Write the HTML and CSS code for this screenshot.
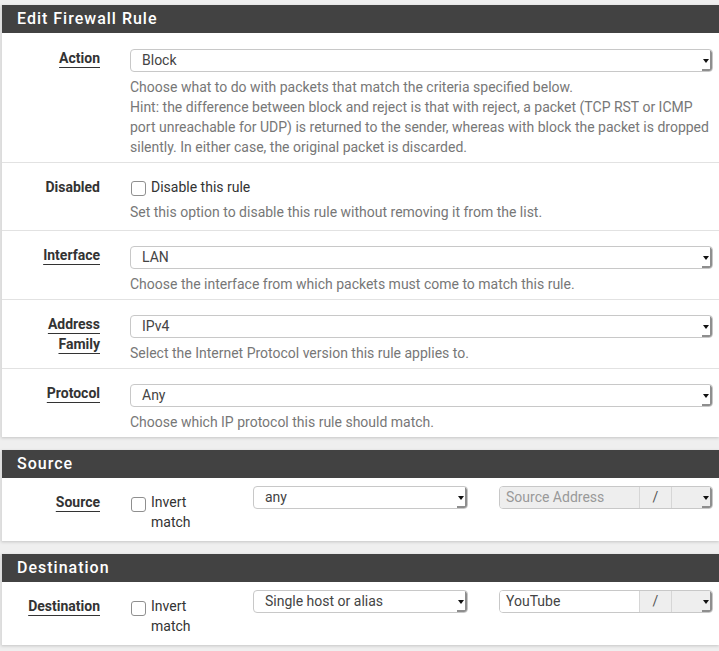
FILE: index.html
```html
<!DOCTYPE html>
<html lang="en">
<head>
<meta charset="utf-8">
<title>Edit Firewall Rule</title>
<link rel="stylesheet" href="styles.css">
</head>
<body>
<div class="page">
  <section class="panel panel-main">
    <h2 class="panel-title">Edit Firewall Rule</h2>
    <div class="panel-body">
      <div class="row">
        <div class="label"><span class="req">Action</span></div>
        <div class="field">
          <div class="select"><span class="val">Block</span><span class="caret"></span></div>
          <p class="help">Choose what to do with packets that match the criteria specified below.<br>Hint: the difference between block and reject is that with reject, a packet (TCP RST or ICMP<br>port unreachable for UDP) is returned to the sender, whereas with block the packet is dropped<br>silently. In either case, the original packet is discarded.</p>
        </div>
      </div>
      <div class="row row-check">
        <div class="label label-check">Disabled</div>
        <div class="field">
          <div class="check-line"><span class="checkbox"></span><span>Disable this rule</span></div>
          <p class="help">Set this option to disable this rule without removing it from the list.</p>
        </div>
      </div>
      <div class="row">
        <div class="label"><span class="req">Interface</span></div>
        <div class="field">
          <div class="select"><span class="val">LAN</span><span class="caret"></span></div>
          <p class="help">Choose the interface from which packets must come to match this rule.</p>
        </div>
      </div>
      <div class="row">
        <div class="label"><span class="req">Address</span><br><span class="req">Family</span></div>
        <div class="field">
          <div class="select"><span class="val">IPv4</span><span class="caret"></span></div>
          <p class="help">Select the Internet Protocol version this rule applies to.</p>
        </div>
      </div>
      <div class="row">
        <div class="label"><span class="req">Protocol</span></div>
        <div class="field">
          <div class="select"><span class="val">Any</span><span class="caret"></span></div>
          <p class="help">Choose which IP protocol this rule should match.</p>
        </div>
      </div>
    </div>
  </section>

  <section class="panel">
    <h2 class="panel-title">Source</h2>
    <div class="panel-body">
      <div class="row row-addr">
        <div class="label label-addr"><span class="req">Source</span></div>
        <div class="invert">
          <span class="checkbox checkbox-addr"></span>
          <span>Invert<br>match</span>
        </div>
        <div class="select select-type"><span class="val">any</span><span class="caret"></span></div>
        <div class="addr-group">
          <span class="addr-input addr-disabled">Source Address</span>
          <span class="addon">/</span>
          <span class="mask"><span class="caret"></span></span>
        </div>
      </div>
    </div>
  </section>

  <section class="panel">
    <h2 class="panel-title">Destination</h2>
    <div class="panel-body">
      <div class="row row-addr">
        <div class="label label-addr"><span class="req">Destination</span></div>
        <div class="invert">
          <span class="checkbox checkbox-addr"></span>
          <span>Invert<br>match</span>
        </div>
        <div class="select select-type"><span class="val">Single host or alias</span><span class="caret"></span></div>
        <div class="addr-group">
          <span class="addr-input">YouTube</span>
          <span class="addon">/</span>
          <span class="mask"><span class="caret"></span></span>
        </div>
      </div>
    </div>
  </section>
</div>
</body>
</html>
```

FILE: styles.css
```css
html, body {
  margin: 0;
  overflow: hidden;
}

body {
  background: #efefef;
  font-family: Roboto, "Liberation Sans", Arial, sans-serif;
  font-size: 14px;
  color: #333;
}

.page {
  width: 719px;
  box-sizing: border-box;
  padding: 5px 0 0 1px;
  overflow: hidden;
}

.panel {
  background: #fff;
  border-left: 1px solid #dcdcdc;
  box-shadow: 0 1px 3px rgba(0, 0, 0, 0.18);
  margin-bottom: 13px;
}

.panel-title {
  margin: 0;
  height: 28px;
  line-height: 28px;
  padding-left: 15px;
  background: #424242;
  color: #fff;
  font-size: 16px;
  font-weight: 500;
  letter-spacing: 1px;
}

.row {
  display: flex;
  align-items: flex-start;
  padding: 15px 0 5px;
  border-top: 1px solid #e2e2e2;
}

.row:first-child {
  border-top: none;
  padding-top: 16px;
}

.row-check {
  padding: 14px 0 8px;
}

.label {
  flex: none;
  width: 98px;
  padding-right: 15px;
  text-align: right;
  font-weight: 700;
  line-height: 20px;
  color: #333;
  margin-top: -1px;
}

.label-check {
  margin-top: 0;
}

.req {
  text-decoration: underline;
  text-decoration-thickness: 1px;
  text-underline-offset: 4px;
}

.field {
  flex: none;
  margin-left: 15px;
  width: 583px;
}

.select {
  display: flex;
  align-items: stretch;
  height: 23px;
  box-sizing: border-box;
  border: 1px solid #c8c8c8;
  border-radius: 4px;
  background: #fff;
  overflow: hidden;
}

.val {
  flex: 1;
  padding-left: 11px;
  line-height: 21px;
  color: #444;
  white-space: nowrap;
  overflow: hidden;
}

.caret {
  width: 10px;
  flex: none;
  display: flex;
  align-items: center;
  justify-content: center;
  box-shadow: inset -2px -2px 0 #8e8e8e;
  border-top-right-radius: 3px;
}

.caret::after {
  content: "";
  width: 0;
  height: 0;
  margin-right: 2px;
  border-left: 3px solid transparent;
  border-right: 3px solid transparent;
  border-top: 4px solid #111;
}

.help {
  margin: 5px 0 0;
  line-height: 20px;
  color: #777;
  white-space: nowrap;
}

.check-line {
  display: flex;
  align-items: flex-start;
  line-height: 20px;
  color: #333;
}

.checkbox {
  flex: none;
  width: 15px;
  height: 15px;
  box-sizing: border-box;
  border: 1px solid #8f8f8f;
  border-radius: 3px;
  background: #fff;
  margin: 4px 5px 0 1px;
}

/* source / destination rows */
.row-addr {
  padding: 8px 0 9px;
}

.row-addr:first-child {
  padding-top: 8px;
}

.label-addr {
  margin-top: 0;
  padding-top: 6px;
}

.invert {
  flex: none;
  margin-left: 15px;
  width: 108px;
  display: flex;
  align-items: flex-start;
  line-height: 20px;
  padding-top: 6px;
  color: #333;
}

.checkbox-addr {
  margin-top: 5px;
}

.select-type {
  flex: none;
  width: 215px;
  margin-left: 15px;
}

.addr-group {
  flex: none;
  margin-left: 31px;
  width: 214px;
  height: 23px;
  box-sizing: border-box;
  display: flex;
  border: 1px solid #c8c8c8;
  border-radius: 4px;
  overflow: hidden;
}

.addr-input {
  width: 140px;
  padding-left: 6px;
  box-sizing: border-box;
  line-height: 21px;
  color: #444;
  background: #fff;
  border-right: 1px solid #d6d6d6;
}

.addr-disabled {
  background: #eee;
  color: #999;
}

.addon {
  width: 32px;
  flex: none;
  box-sizing: border-box;
  text-align: center;
  line-height: 21px;
  background: #eee;
  color: #555;
  border-right: 1px solid #d6d6d6;
}

.mask {
  flex: 1;
  display: flex;
  justify-content: flex-end;
  background: #eee;
}
```
